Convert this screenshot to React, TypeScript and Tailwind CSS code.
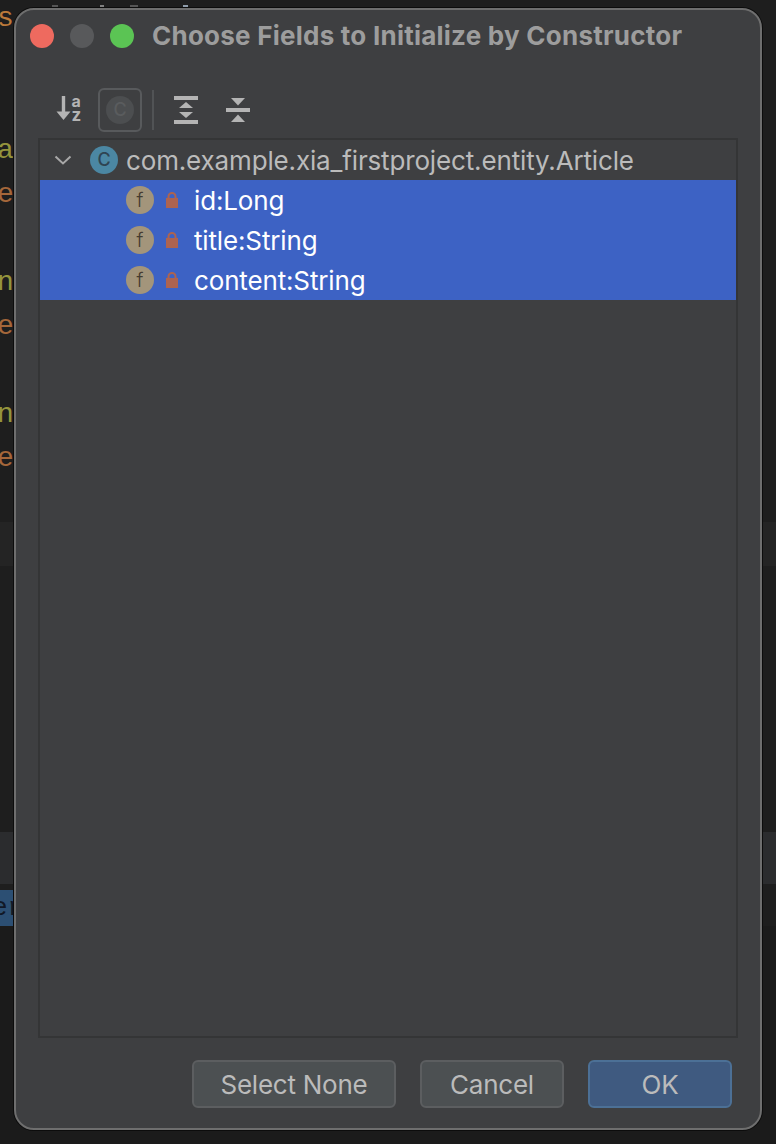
import React from "react";

const Sans = "[font-family:Inter,'Noto_Sans',sans-serif]";

function SortIcon() {
  return (
    <svg width="28" height="28" viewBox="0 0 28 28" className="shrink-0">
      <path d="M7.5 0v19" stroke="#b4b4b4" strokeWidth="3.4" fill="none" />
      <path d="M0.5 15.5h14L7.5 24z" fill="#b4b4b4" />
      <text x="15.5" y="11" fontSize="16" fontWeight="700" fill="#b4b4b4" fontFamily="Inter, sans-serif">a</text>
      <text x="15.5" y="25" fontSize="17" fontWeight="700" fill="#b4b4b4" fontFamily="Inter, sans-serif">z</text>
    </svg>
  );
}

function ExpandIcon() {
  return (
    <svg width="24" height="28" viewBox="0 0 24 28" className="shrink-0">
      <rect x="0" y="0" width="24" height="4" fill="#b4b4b4" />
      <rect x="0" y="24" width="24" height="4" fill="#b4b4b4" />
      <path d="M12 6l7 6H5z" fill="#b4b4b4" />
      <path d="M12 22l-7-6h14z" fill="#b4b4b4" />
    </svg>
  );
}

function CollapseIcon() {
  return (
    <svg width="24" height="28" viewBox="0 0 24 28" className="shrink-0">
      <rect x="0" y="12" width="24" height="4" fill="#b4b4b4" />
      <path d="M5 2h14l-7 7.5z" fill="#b4b4b4" />
      <path d="M12 18.5l7 7.5H5z" fill="#b4b4b4" />
    </svg>
  );
}

function Chevron() {
  return (
    <svg width="18" height="10" viewBox="0 0 18 10" className="shrink-0">
      <path d="M1.5 1.5L9 8.5l7.5-7" stroke="#a8a8a8" strokeWidth="2" fill="none" />
    </svg>
  );
}

function ClassIcon() {
  return (
    <div className="w-7 h-7 shrink-0 rounded-full bg-[#4b87a3] flex items-center justify-center">
      <span className="text-[#2f4452] text-[18px] leading-none font-medium [font-family:Inter,sans-serif]">C</span>
    </div>
  );
}

function FieldIcon() {
  return (
    <div className="w-7 h-7 shrink-0 rounded-full bg-[#a3957b] flex items-center justify-center">
      <span className="text-[#453b30] text-[20px] leading-none font-light [font-family:Inter,sans-serif]">f</span>
    </div>
  );
}

function Lock() {
  return (
    <svg width="12" height="16" viewBox="0 0 12 16" className="shrink-0">
      <path d="M2.5 7V4.5a3.5 3.5 0 0 1 7 0V7" stroke="#ad6350" strokeWidth="2" fill="none" />
      <rect x="0" y="6" width="12" height="10" fill="#ad6350" />
    </svg>
  );
}

function FieldRow({ label }: { label: string }) {
  return (
    <div className="h-10 flex items-center pl-[86px] bg-[#3d62c4]">
      <FieldIcon />
      <div className="ml-3">
        <Lock />
      </div>
      <span className="ml-4 mt-[2px] text-white text-[26px] leading-none tracking-[-0.15px]">{label}</span>
    </div>
  );
}

function Btn({ label, w, primary }: { label: string; w: string; primary?: boolean }) {
  return (
    <div
      className={`${w} h-12 rounded-md border-2 flex items-center justify-center text-[26px] tracking-[-0.25px] text-[#bbbbbb] ${
        primary ? "bg-[#3f5a80] border-[#4c7096]" : "bg-[#4c5052] border-[#5c5e60]"
      }`}
    >
      {label}
    </div>
  );
}

const SideRows = [
  { t: "s", c: "text-[#bc7a3a]" },
  { t: "", c: "" },
  { t: "", c: "" },
  { t: "a", c: "text-[#94943c]" },
  { t: "e", c: "text-[#a5673a]" },
  { t: "", c: "" },
  { t: "n", c: "text-[#94943c]" },
  { t: "e", c: "text-[#a5673a]" },
  { t: "", c: "" },
  { t: "n", c: "text-[#94943c]" },
  { t: "e", c: "text-[#a5673a]" },
];

export default function App() {
  return (
    <div className={`relative w-[776px] h-[1144px] overflow-hidden bg-[#1e1e1e] ${Sans}`}>
      {/* editor behind the dialog */}
      <div className="flex flex-col h-full">
        <div className="h-[522px] shrink-0 bg-[#1e1e1e] overflow-hidden">
          <div className="flex items-start h-[6px] pt-[5px]">
            <div className="ml-[52px] w-[6px] h-[2px] bg-[#555555]" />
            <div className="ml-[42px] w-[4px] h-[3px] bg-[#808080]" />
            <div className="ml-[26px] w-[8px] h-[2px] bg-[#555555]" />
            <div className="ml-[45px] w-[5px] h-[3px] bg-[#8f9caa]" />
          </div>
          <div className="-mt-[9px] w-[14px] overflow-hidden flex flex-col [font-family:'Liberation_Mono',monospace] text-[28px]">
            {SideRows.map((r, i) => (
              <div key={i} className={`h-11 leading-[44px] shrink-0 -ml-[3px] ${r.c}`}>
                {r.t}
              </div>
            ))}
          </div>
        </div>
        <div className="h-[44px] shrink-0 bg-[#242424]" />
        <div className="h-[266px] shrink-0 bg-[#1e1e1e]" />
        <div className="h-[52px] shrink-0 bg-[#2b2c2e]" />
        <div className="h-[6px] shrink-0 bg-[#1e1e1e]" />
        <div className="h-[36px] shrink-0 bg-[#1e1e1e]">
          <div className="w-[14px] h-full overflow-hidden bg-[#2c4f73] text-[#111827] text-[26px] leading-[36px] [font-family:'Liberation_Mono',monospace] whitespace-nowrap">
            <span className="-ml-[8px] inline-block">er</span>
          </div>
        </div>
        <div className="grow bg-[#1b1b1b]" />
      </div>

      {/* dialog */}
      <div className="absolute left-[14px] top-[8px] w-[748px] h-[1122px] flex flex-col rounded-[20px] border-2 border-[#6e6e6e] bg-[#3e3f41] shadow-[0_0_0_1px_#0c0c0c]">
        <div className="h-[50px] flex items-center pl-[14px] shrink-0">
          <div className="w-6 h-6 rounded-full bg-[#ee6a5f] mt-[2px]" />
          <div className="w-6 h-6 rounded-full bg-[#58595b] ml-4 mt-[2px]" />
          <div className="w-6 h-6 rounded-full bg-[#5bc454] ml-4 mt-[2px]" />
          <span className="ml-[18px] text-[26px] font-bold tracking-[0.24px] text-[#9d9d9d] whitespace-nowrap">
            Choose Fields to Initialize by Constructor
          </span>
        </div>
        <div className="h-[44px] mt-[28px] flex items-center pl-[40px] shrink-0">
          <SortIcon />
          <div className="ml-[14px] w-11 h-11 rounded-md border-2 border-[#585a5c] flex items-center justify-center">
            <div className="w-7 h-7 rounded-full bg-[#4c4e50] flex items-center justify-center">
              <span className="text-[#5a5c5e] text-[18px] leading-none font-medium">C</span>
            </div>
          </div>
          <div className="ml-[10px] w-[2px] h-10 bg-[#515355]" />
          <div className="ml-5">
            <ExpandIcon />
          </div>
          <div className="ml-7">
            <CollapseIcon />
          </div>
        </div>
        <div className="mt-[6px] mx-[22px] h-[900px] shrink-0 border-2 border-[#343536] text-[26px]">
          <div className="h-10 flex items-center pl-[14px]">
            <Chevron />
            <div className="ml-[18px]">
              <ClassIcon />
            </div>
            <span className="ml-[8px] mt-[2px] text-[#bbbbbb] leading-none tracking-[-0.15px] whitespace-nowrap">
              com.example.xia_firstproject.entity.Article
            </span>
          </div>
          <FieldRow label="id:Long" />
          <FieldRow label="title:String" />
          <FieldRow label="content:String" />
        </div>
        <div className="mt-[22px] flex justify-end gap-6 pr-[28px]">
          <Btn label="Select None" w="w-[204px]" />
          <Btn label="Cancel" w="w-[144px]" />
          <Btn label="OK" w="w-[144px]" primary />
        </div>
      </div>
    </div>
  );
}
